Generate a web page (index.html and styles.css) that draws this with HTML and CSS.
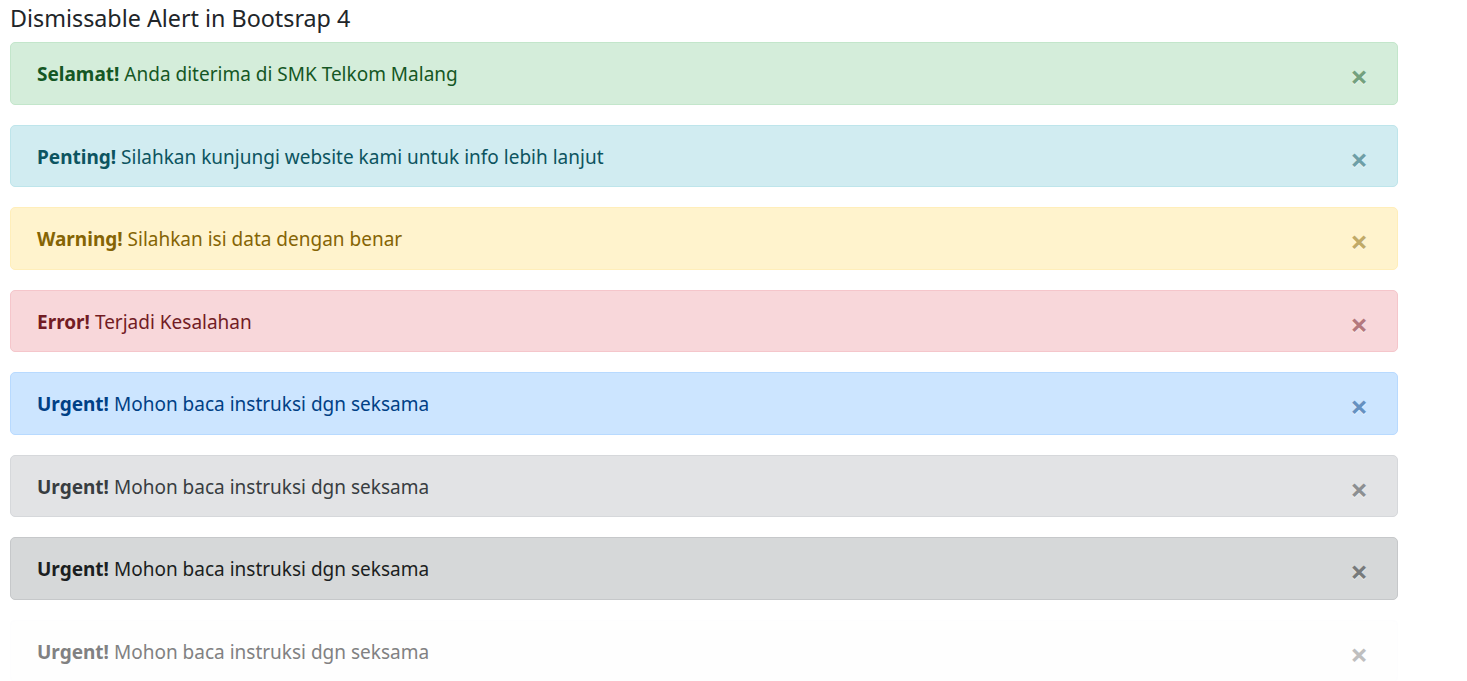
FILE: index.html
```html
<!DOCTYPE html>
<html>
<head>
<meta charset="utf-8">
<link rel="stylesheet" href="styles.css">
</head>
<body>
<div class="page">
  <h4 class="title">Dismissable Alert in Bootsrap 4</h4>
  <div class="alert success"><span><strong>Selamat!</strong> Anda diterima di SMK Telkom Malang</span><button class="close">&times;</button></div>
  <div class="alert info"><span><strong>Penting!</strong> Silahkan kunjungi website kami untuk info lebih lanjut</span><button class="close">&times;</button></div>
  <div class="alert warning"><span><strong>Warning!</strong> Silahkan isi data dengan benar</span><button class="close">&times;</button></div>
  <div class="alert danger"><span><strong>Error!</strong> Terjadi Kesalahan</span><button class="close">&times;</button></div>
  <div class="alert primary"><span><strong>Urgent!</strong> Mohon baca instruksi dgn seksama</span><button class="close">&times;</button></div>
  <div class="alert secondary"><span><strong>Urgent!</strong> Mohon baca instruksi dgn seksama</span><button class="close">&times;</button></div>
  <div class="alert dark"><span><strong>Urgent!</strong> Mohon baca instruksi dgn seksama</span><button class="close">&times;</button></div>
  <div class="alert light"><span><strong>Urgent!</strong> Mohon baca instruksi dgn seksama</span><button class="close">&times;</button></div>
</div>
</body>
</html>
```

FILE: styles.css
```css
* { box-sizing: border-box; }
body {
  margin: 0;
  font-family: "Noto Sans", "Open Sans", sans-serif;
  font-size: 19px;
  line-height: 1.5;
  color: #212529;
  background: #fff;
}
.page {
  width: 1408px;
  padding: 0 10px;
  display: flex;
  flex-direction: column;
  gap: 20px;
}
.title {
  margin: 0 0 -14px 0;
  font-size: 23.3px;
  font-weight: 400;
  line-height: 36px;
  color: #212529;
}
.alert {
  display: flex;
  justify-content: space-between;
  align-items: flex-start;
  height: 62.5px;
  padding: 16px 0 14px 26px;
  border: 1px solid transparent;
  border-radius: 5px;
  line-height: 30px;
}
.alert strong { font-weight: 700; }
.close {
  background: none;
  border: 0;
  padding: 0;
  margin: -13px 6px 0 0;
  width: 64px;
  height: 60px;
  font-family: inherit;
  font-size: 31px;
  font-weight: 700;
  line-height: 60px;
  text-align: center;
  color: inherit;
  text-shadow: 0 1px 0 #fff;
  opacity: .5;
  cursor: pointer;
}
.success { background: #d4edda; border-color: #c3e6cb; color: #155724; }
.info { background: #d1ecf1; border-color: #bee5eb; color: #0c5460; }
.warning { background: #fff3cd; border-color: #ffeeba; color: #856404; }
.danger { background: #f8d7da; border-color: #f5c6cb; color: #721c24; }
.primary { background: #cce5ff; border-color: #b8daff; color: #004085; }
.secondary { background: #e2e3e5; border-color: #d6d8db; color: #383d41; }
.dark { background: #d6d8d9; border-color: #c6c8ca; color: #1b1e21; }
.light { background: #fefefe; border-color: #fdfdfe; color: #818182; }
```
